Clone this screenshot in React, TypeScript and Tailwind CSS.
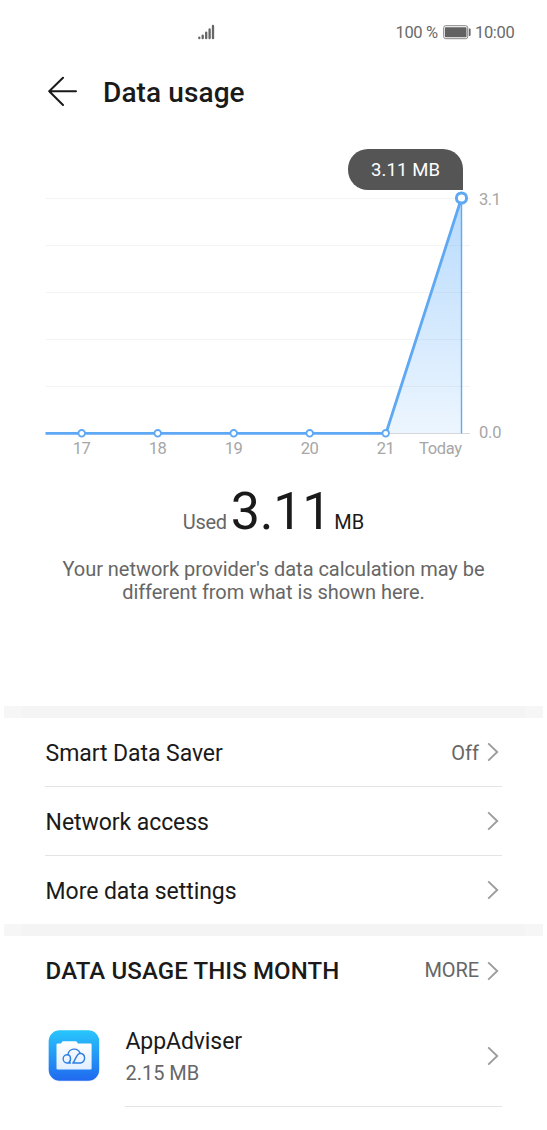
import type { ReactNode } from "react";

const points = [
  { x: 82, label: "17" },
  { x: 158, label: "18" },
  { x: 234, label: "19" },
  { x: 310, label: "20" },
  { x: 386, label: "21" },
];

const gridLines = [58.5, 105.5, 152.5, 199.5, 246.5];

function StatusBar() {
  return (
    <div className="flex h-[60px] items-start pr-[32px] pl-[197px] pt-[22px] text-[16.5px] leading-[21px] text-[#6a6a6a]">
      <svg className="mt-[1px] h-[18px] w-[19px]" viewBox="0 0 19 18" fill="none" stroke="#666666" strokeWidth="2.300" strokeLinecap="round">
        <path d="M2.3 15.2V14.7M5.7 15.2V12.6M9.2 15.2V9.6M12.6 15.2V6.4M16 15.2V3" />
      </svg>
      <div className="ml-auto flex items-start">
        <span className="tracking-[-0.3px]">100 %</span>
        <svg className="ml-[5px] mr-[3px] mt-[3px] h-[15px] w-[29px]" viewBox="0 0 29 15">
          <rect x="0.7" y="0.7" width="24" height="13" rx="2" fill="#fff" stroke="#858585" />
          <rect x="1.900" y="2.2" width="21.600" height="10" rx="0.6" fill="#626262" />
          <path d="M25.800 3.5h.8a1 1 0 0 1 1 1v5.500a1 1 0 0 1-1 1H25.800z" fill="#666666" />
        </svg>
        <span className="mr-[0.5px] tracking-[-0.3px]">10:00</span>
      </div>
    </div>
  );
}

function Chevron() {
  return (
    <svg className="h-[20px] w-[12px] shrink-0" viewBox="0 0 12 20" fill="none" stroke="#9c9c9c" strokeWidth="1.9">
      <path d="M1.200 1.400L10.200 10L1.200 18.600" />
    </svg>
  );
}

function UsageChart() {
  return (
    <div className="relative h-[325px]">
      <svg className="block h-[325px] w-[547px]" viewBox="0 0 547 325" fontFamily="Roboto, sans-serif" fontSize="16.500" fill="#a6a6a6">
        <defs>
          <linearGradient id="area" x1="0" y1="0" x2="0" y2="1">
            <stop offset="0" stopColor="#55a8fa" stopOpacity="0.42" />
            <stop offset="1" stopColor="#55a8fa" stopOpacity="0.11" />
          </linearGradient>
        </defs>
        {gridLines.map((y) => (
          <path key={y} d={`M45.500 ${y}H470`} stroke="#f4f4f4" strokeWidth="1" />
        ))}
        <path d="M386 293.500H470" stroke="#d9d9d9" strokeWidth="1" />
        <path d="M386 293.300L461.500 58V293.300Z" fill="url(#area)" />
        <path d="M461.500 58V293.500" stroke="#62a9f3" strokeWidth="1.400" />
        <path d="M45.500 293.300H386L461.500 58" fill="none" stroke="#5fa8f3" strokeWidth="2.800" />
        {points.map((p) => (
          <g key={p.label}>
            <circle cx={p.x - 0.3} cy="293.300" r="3.300" fill="#fff" stroke="#5fa8f3" strokeWidth="1.800" />
            <text x={p.x - 0.3} y="314" textAnchor="middle" textLength="18">{p.label}</text>
          </g>
        ))}
        <circle cx="461.500" cy="58" r="5.100" fill="#fff" stroke="#5fa8f3" strokeWidth="3" />
        <text x="419" y="314" textLength="43">Today</text>
        <text x="479" y="65" textLength="22">3.1</text>
        <text x="479" y="298" textLength="22.500">0.0</text>
      </svg>
      <div className="absolute left-[348px] top-[9px] flex h-[41px] w-[115px] items-center justify-center rounded-[20px] rounded-br-none bg-[#555555] pt-[3px] text-[18.5px] tracking-[0.120px] text-white">
        3.11 MB
      </div>
    </div>
  );
}

function SectionBand() {
  return (
    <div className="mx-[4px] flex h-[12px] bg-[#f4f4f4]">
      <div className="w-[18px] bg-[#f6f6f6]" />
      <div className="ml-auto w-[18px] bg-[#f6f6f6]" />
    </div>
  );
}

function SettingRow({ title, value, last }: { title: ReactNode; value?: string; last?: boolean }) {
  return (
    <div className={last ? "mx-[45px] flex h-[68px] items-center" : "mx-[45px] flex h-[69px] items-center border-b border-[#e4e4e4]"}>
      <span className="pl-[0.6px] pt-[2px] text-[23px] leading-[27px] tracking-[-0.070px] text-[#1a1a1a]">{title}</span>
      <div className="ml-auto mr-[3px] flex items-center gap-[8px]">
        {value && <span className="pt-[2px] text-[20px] leading-[23px] text-[#666666]">{value}</span>}
        <Chevron />
      </div>
    </div>
  );
}

function AppIcon() {
  return (
    <svg className="h-[56px] w-[56px] shrink-0" viewBox="0 0 56 56">
      <defs>
        <linearGradient id="tile" x1="0" y1="0" x2="0" y2="1">
          <stop offset="0" stopColor="#28c6fc" />
          <stop offset="1" stopColor="#2069ef" />
        </linearGradient>
        <linearGradient id="folder" x1="0" y1="0" x2="0" y2="1">
          <stop offset="0" stopColor="#ffffff" />
          <stop offset="1" stopColor="#e2efff" />
        </linearGradient>
      </defs>
      <rect x="2.700" y="3" width="50.500" height="50.500" rx="11" fill="#dfe9fb" />
      <rect x="2.700" y="2.200" width="50.500" height="50.500" rx="11" fill="url(#tile)" />
      <path d="M10.500 16.600q0-1.100 1.100-1.100h3.500l.8-1.600q.4-.7 1.300-.7h12.500q.9 0 1.300.7l.8 1.600h12.700q1.100 0 1.100 1.100v23.800q0 1.100-1.100 1.100H11.600q-1.100 0-1.100-1.100z" fill="url(#folder)" />
      <g fill="none" stroke="#2d7fe3" strokeWidth="1.400" strokeLinecap="round">
        <path d="M24.500 35H21A4.100 4.100 0 0 1 21.500 26.800C24.700 26.600 25.800 32.500 22.600 34.800" />
        <path d="M22 26.700A6.200 6.200 0 0 1 34 25.200" />
        <path d="M26.800 35C29.500 33 30 25.200 34.600 25.200A5 5 0 0 1 34.600 35H26.800" />
      </g>
    </svg>
  );
}

export default function App() {
  return (
    <main className="h-[1130px] w-[547px] overflow-hidden bg-white font-[Roboto,sans-serif] text-[#1a1a1a]">
      <StatusBar />
      <header className="flex h-[80px] items-start pl-[48px] pt-[16px]">
        <svg className="h-[31px] w-[30px]" viewBox="0 0 30 31" fill="none" stroke="#1a1a1a" strokeWidth="2" strokeLinecap="round" strokeLinejoin="round">
          <path d="M28 15.300H1.200M15 1.800L1.200 15.300L15 29" />
        </svg>
        <h1 className="ml-[25px] text-[28px] font-medium leading-[33px] tracking-[0.1px]">Data usage</h1>
      </header>
      <UsageChart />
      <section className="h-[241px] pt-[15px]">
        <div className="flex h-[64px] items-baseline justify-center leading-[64px]">
          <span className="text-[20px] tracking-[-0.3px] text-[#666666]">Used</span>
          <span className="ml-[4px] text-[52px] tracking-[-0.200px]">3.11</span>
          <span className="ml-[3px] text-[20px]">MB</span>
        </div>
        <p className="mt-[14px] text-center text-[20px] leading-[23px] tracking-[-0.040px] text-[#666666]">
          Your network provider's data calculation may be
          <br />
          different from what is shown here.
        </p>
      </section>
      <SectionBand />
      <SettingRow title="Smart Data Saver" value="Off" />
      <SettingRow title="Network access" />
      <SettingRow title="More data settings" last />
      <SectionBand />
      <div className="mx-[45px] flex h-[69px] items-center">
        <h2 className="pl-[0.6px] text-[24px] font-medium leading-[28px] tracking-[0.120px]">DATA USAGE THIS MONTH</h2>
        <div className="ml-auto mr-[3px] flex items-center gap-[8px]">
          <span className="text-[20px] leading-[23px] tracking-[-0.1px] text-[#666666]">MORE</span>
          <Chevron />
        </div>
      </div>
      <div className="flex h-[102px] pl-[46px] pr-[45px]">
        <div className="pt-[23px]">
          <AppIcon />
        </div>
        <div className="ml-[23px] flex flex-1 items-center border-b border-[#e4e4e4]">
          <div className="pl-[0.4px] pt-[2px]">
            <div className="text-[23px] leading-[27px] tracking-[-0.080px]">AppAdviser</div>
            <div className="mt-[6px] text-[20px] leading-[24px] text-[#666666]">2.15 MB</div>
          </div>
          <div className="ml-auto mr-[3px]">
            <Chevron />
          </div>
        </div>
      </div>
    </main>
  );
}
